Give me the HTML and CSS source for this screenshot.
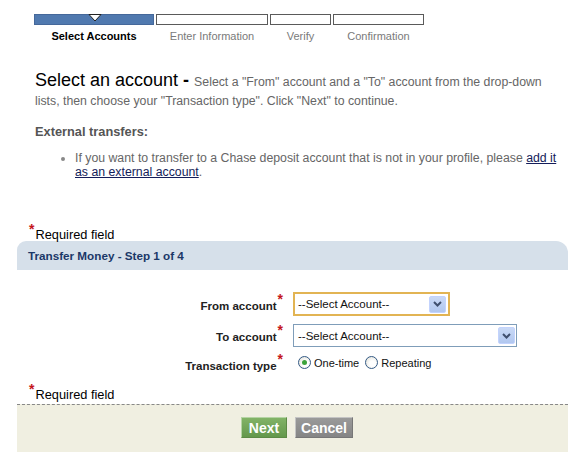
FILE: index.html
```html
<!DOCTYPE html>
<html>
<head>
<meta charset="utf-8">
<link rel="stylesheet" href="styles.css">
</head>
<body>
<div class="page">
  <div class="steps">
    <div class="seg seg1 active">
      <svg class="pointer" width="14" height="8" viewBox="0 0 14 8"><path d="M1 0.5 L13 0.5 L7 7 Z" fill="#fff" stroke="#222" stroke-width="1"/></svg>
    </div>
    <div class="seg seg2"></div>
    <div class="seg seg3"></div>
    <div class="seg seg4"></div>
  </div>
  <div class="step-labels">
    <div class="lbl seg1 current">Select Accounts</div>
    <div class="lbl seg2">Enter Information</div>
    <div class="lbl seg3">Verify</div>
    <div class="lbl seg4">Confirmation</div>
  </div>

  <div class="intro">
    <p class="lead"><span class="title">Select an account</span><span class="dash"> - </span>Select a "From" account and a "To" account from the drop-down lists, then choose your "Transaction type". Click "Next" to continue.</p>
    <p class="ext">External transfers:</p>
    <ul class="bullets">
      <li>If you want to transfer to a Chase deposit account that is not in your profile, please <a href="#">add it as an external account</a>.</li>
    </ul>
  </div>

  <div class="req req-top"><span class="star">*</span>Required field</div>

  <div class="panel">
    <div class="panel-head">Transfer Money - Step 1 of 4</div>
    <div class="form">
      <div class="row row1">
        <div class="label">From account<span class="star">*</span></div>
        <div class="select focus w1"><span>--Select Account--</span><span class="btn"><svg width="9" height="6" viewBox="0 0 9 6"><path d="M1 1 L4.5 4.5 L8 1" fill="none" stroke="#3f4f6e" stroke-width="2"/></svg></span></div>
      </div>
      <div class="row row2">
        <div class="label">To account<span class="star">*</span></div>
        <div class="select w2"><span>--Select Account--</span><span class="btn"><svg width="9" height="6" viewBox="0 0 9 6"><path d="M1 1 L4.5 4.5 L8 1" fill="none" stroke="#3f4f6e" stroke-width="2"/></svg></span></div>
      </div>
      <div class="row row3">
        <div class="label">Transaction type<span class="star">*</span></div>
        <div class="radios">
          <span class="radio checked"></span><span class="rtext">One-time</span>
          <span class="radio"></span><span class="rtext">Repeating</span>
        </div>
      </div>
    </div>
    <div class="req req-bottom"><span class="star">*</span>Required field</div>
    <div class="footer">
      <span class="button next">Next</span>
      <span class="button cancel">Cancel</span>
    </div>
  </div>
</div>
</body>
</html>
```
FILE: styles.css
```css
* { box-sizing: border-box; }
html, body { margin: 0; padding: 0; background: #fff; }
body { font-family: "Liberation Sans", Arial, sans-serif; color: #000; }
.page { width: 573px; height: 453px; overflow: hidden; }

.steps { display: flex; gap: 2px; margin: 14px 0 0 34px; height: 11px; }
.seg { height: 11px; border: 1px solid #5a5a5a; background: #fff; position: relative; }
.seg1 { width: 120px; }
.seg2 { width: 112px; }
.seg3 { width: 61px; }
.seg4 { width: 91px; }
.seg.active { background: #5079af; border-color: #45689a; }
.pointer { position: absolute; left: 53px; top: -1px; }

.step-labels { display: flex; gap: 2px; margin: 5px 0 0 34px; font-size: 11px; line-height: 13px; }
.lbl { text-align: center; color: #7a7a7a; white-space: nowrap; }
.lbl.current { color: #000; font-weight: bold; }

.intro { padding: 0 12px 0 35px; }
.lead { margin: 28px 0 0; font-size: 12.3px; line-height: 19px; color: #666; }
.title { font-size: 18px; color: #000; }
.dash { font-size: 18px; color: #000; font-weight: bold; }
.ext { margin: 13px 0 0; font-size: 12.8px; font-weight: bold; color: #555; line-height: 15px; }
.bullets { margin: 12px 0 0; padding: 0 0 0 40px; font-size: 12.3px; line-height: 14px; color: #666; }
.bullets li { list-style: disc; }
.bullets li::marker { color: #888; font-size: 12px; }
.bullets a { color: #141d5a; text-decoration: underline; }

.req { font-size: 12.8px; color: #000; line-height: 14px; }
.req .star { color: #c4161c; font-weight: bold; font-size: 14px; position: relative; top: -5px; margin-right: 1px; }
.req-top { margin: 48px 0 0 29px; }

.panel { margin: 0 5px 0 17px; }
.panel-head { height: 29px; background: #d6e0ea; border-radius: 9px 12px 0 0; color: #1b3868; font-size: 11.7px; font-weight: bold; line-height: 29px; padding-left: 11px; margin-top: -1px; }

.form { padding-top: 22px; }
.row { display: flex; align-items: flex-end; }
.row2 { margin-top: 8px; }
.row3 { margin-top: 9px; }
.label { width: 266px; text-align: right; font-size: 11.5px; font-weight: bold; color: #222; line-height: 14px; white-space: nowrap; }
.row1 .label { margin-bottom: 3px; }
.row2 .label { margin-bottom: 3px; }
.row3 .label { margin-bottom: -4px; }
.label .star { color: #c4161c; font-size: 14px; position: relative; top: -6px; margin-left: 1px; }
.select { margin-left: 10px; display: flex; align-items: center; justify-content: space-between; font-size: 11.5px; color: #111; background: #fff; }
.select.w1 { width: 157px; height: 24px; border: 2px solid #e2b453; padding: 0 2px 0 3px; }
.select.w2 { width: 224px; height: 23px; border: 1px solid #7f9db9; padding: 0 1px 0 4px; }
.btn { width: 17px; height: 17px; background: linear-gradient(#c9d9f6, #b1c7ef); border: 1px solid #c3d3fd; border-radius: 2px; display: flex; align-items: center; justify-content: center; }

.radios { margin-left: 15px; display: flex; align-items: center; font-size: 11px; color: #111; }
.radio { width: 13px; height: 13px; border-radius: 50%; border: 1px solid #345a85; background: radial-gradient(circle at 60% 60%, #fff 30%, #dcdcd2 100%); position: relative; }
.radio.checked::after { content: ""; position: absolute; left: 3px; top: 3px; width: 5px; height: 5px; border-radius: 50%; background: #3ca33a; }
.rtext { margin: 0 6px 0 3px; }

.req-bottom { margin: 18px 0 0 12px; }
.footer { border-top: 1px dashed #888; background: #f0efe1; height: 48px; margin-top: 2px; display: flex; justify-content: center; align-items: flex-start; padding-top: 12px; gap: 8px; padding-left: 9px; }
.button { color: #fff; font-weight: bold; font-size: 14px; height: 21px; line-height: 20px; text-align: center; border: 1px solid; }
.next { width: 46px; background: linear-gradient(#82b367, #64984c); border-color: #b5d4a4 #5c8a45 #5c8a45 #b5d4a4; }
.cancel { width: 58px; background: linear-gradient(#9a9a9a, #858585); border-color: #c4c4c4 #777 #777 #c4c4c4; }
```
